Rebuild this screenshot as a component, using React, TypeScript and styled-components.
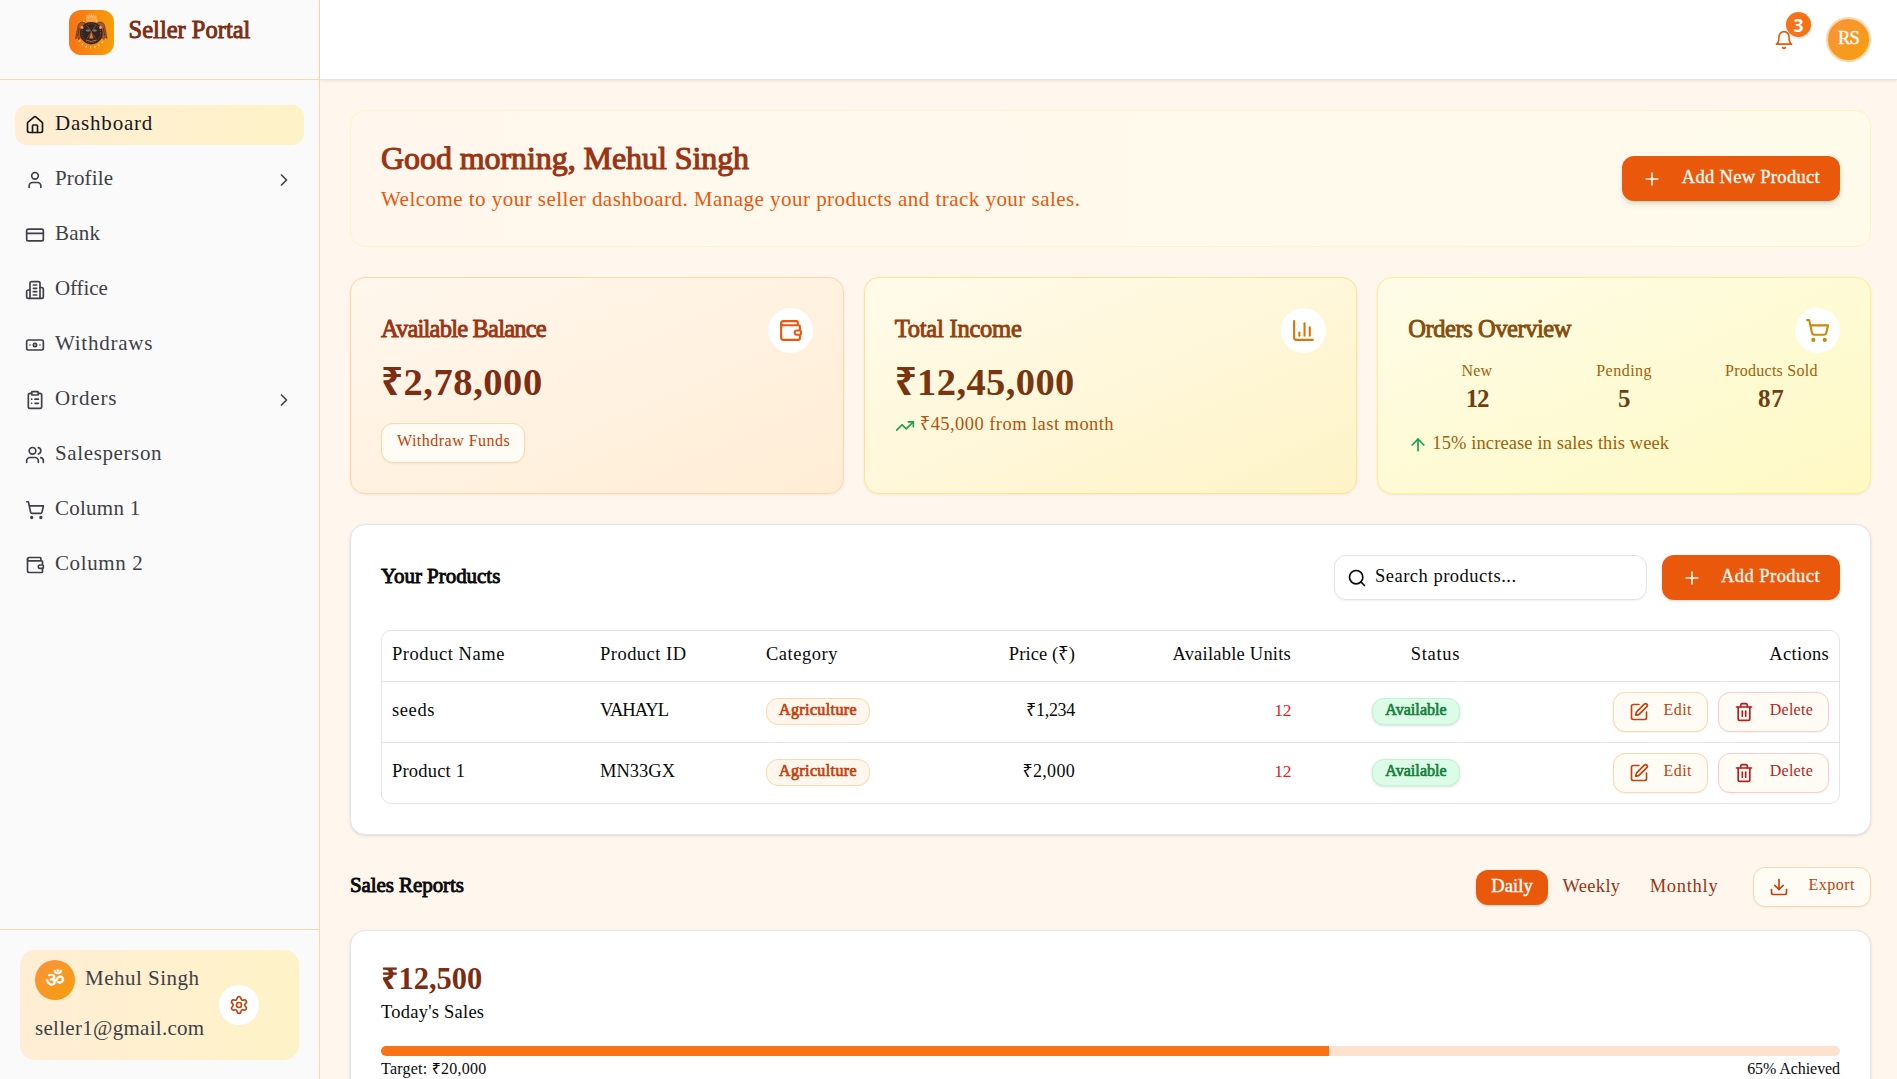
import React from 'react';
import styled, { createGlobalStyle, css } from 'styled-components';
import {
  ArrowUp,
  Banknote,
  ChartColumn,
  ChevronRight,
  ClipboardList,
  CreditCard,
  Download,
  House,
  Plus,
  Search,
  Settings,
  ShoppingCart,
  SquarePen,
  Trash2,
  TrendingUp,
  User,
  Users,
  Wallet,
} from 'lucide-react';

const GlobalStyle = createGlobalStyle`
  *, *::before, *::after { box-sizing: border-box; }
  html, body { margin: 0; height: 100%; overflow: hidden; }
  body {
    background: #fff6ed;
    color: #0a0a0a;
    font-family: 'Liberation Serif', 'Noto Sans', serif;
  }
  h1, h2, h3 { margin: 0; }
  button { font: inherit; margin: 0; cursor: pointer; }
  svg { flex: none; display: block; }
`;

interface TextProps {
  $size?: number;
  $track?: number;
  $lh?: number;
  $lift?: number;
  $color?: string;
  $heavy?: number;
  $bold?: boolean;
}

const Text = styled.span<TextProps>`
  display: block;
  white-space: pre;
  font-size: ${p => p.$size ?? 18.5}px;
  letter-spacing: ${p => p.$track ?? 0}px;
  line-height: calc(${p => p.$lh ?? 26}px - ${p => p.$lift ?? 0.18}em);
  padding-bottom: ${p => p.$lift ?? 0.18}em;
  font-weight: ${p => (p.$bold ? 700 : 400)};
  ${p => p.$color && css`color: ${p.$color};`}
  ${p => p.$heavy && css`-webkit-text-stroke: ${p.$heavy}px currentColor;`}
`;

const SmallText = styled(Text).attrs({ $size: 16, $lift: 0.28 })``;

/* Shell */
const Shell = styled.div`
  display: flex;
  height: 1079px;
  overflow: hidden;
`;

const Sidebar = styled.aside`
  display: flex;
  flex-direction: column;
  flex: none;
  width: 320px;
  background: #fafafa;
  border-right: 1px solid #fed7aa;
`;

const Brand = styled.div`
  display: flex;
  justify-content: center;
  align-items: flex-start;
  gap: 15px;
  flex: none;
  height: 80px;
  padding-top: 10px;
  border-bottom: 1px solid #fed7aa;
`;

const LogoTile = styled.div`
  width: 45px;
  height: 45px;
  border-radius: 12px;
  overflow: hidden;
  background: linear-gradient(to right, #f97316, #f59e0b);
`;

const Nav = styled.nav`
  display: flex;
  flex-direction: column;
  flex: 1;
  gap: 15px;
  padding: 25px 15px;
`;

const NavItem = styled.a<{ $active?: boolean }>`
  display: flex;
  align-items: center;
  gap: 10px;
  height: 40px;
  padding: 0 10px;
  border-radius: 12px;
  color: ${p => (p.$active ? '#18181b' : '#3f3f46')};
  background: ${p => (p.$active ? 'linear-gradient(to right, #ffedd5, #fef3c7)' : 'none')};
  & > svg:last-child:not(:first-child) { margin-left: auto; }
`;

const SidebarFooter = styled.div`
  flex: none;
  height: 150px;
  padding: 20px;
  border-top: 1px solid #fed7aa;
`;

const UserCard = styled.div`
  display: flex;
  align-items: center;
  gap: 15px;
  height: 110px;
  padding: 10px 15px;
  border-radius: 15px;
  background: linear-gradient(to right, #ffedd5, #fef3c7);
  color: #3f3f46;
`;

const UserInfo = styled.div`
  display: flex;
  flex-direction: column;
  gap: 10px;
  width: 169px;
`;

const UserLine = styled.div`
  display: flex;
  align-items: center;
  gap: 10px;
  height: 40px;
`;

const Avatar = styled.div<{ $size: number; $ring?: boolean }>`
  display: flex;
  align-items: center;
  justify-content: center;
  flex: none;
  width: ${p => p.$size}px;
  height: ${p => p.$size}px;
  border-radius: 50%;
  color: #fff;
  background: linear-gradient(to bottom right, #fb923c, #f59e0b) border-box;
  ${p => p.$ring && css`border: 2px solid #fed7aa;`}
`;

const IconCircle = styled.div<{ $size: number; $color: string }>`
  display: flex;
  align-items: center;
  justify-content: center;
  flex: none;
  width: ${p => p.$size}px;
  height: ${p => p.$size}px;
  border-radius: 50%;
  background: #fff;
  color: ${p => p.$color};
`;

/* Main column */
const Main = styled.div`
  display: flex;
  flex-direction: column;
  flex: 1;
  min-width: 0;
`;

const TopBar = styled.header`
  display: flex;
  align-items: center;
  justify-content: flex-end;
  gap: 20px;
  flex: none;
  height: 80px;
  padding-right: 26px;
  background: #fff;
  border-bottom: 1px solid #e5e7eb;
  box-shadow: 0 1px 3px rgba(0, 0, 0, 0.08);
`;

const BellButton = styled.button`
  position: relative;
  display: flex;
  align-items: center;
  justify-content: center;
  width: 45px;
  height: 45px;
  padding: 0;
  border: 0;
  background: none;
  color: #ea580c;
`;

const Count = styled.span`
  position: absolute;
  top: -5px;
  right: -5px;
  display: flex;
  align-items: center;
  justify-content: center;
  width: 25px;
  height: 25px;
  border-radius: 50%;
  background: #f97316;
  color: #fff;
  font: 700 17.5px 'Noto Sans', sans-serif;
  box-shadow: 0 1px 3px rgba(0, 0, 0, 0.15);
`;

const Content = styled.main`
  display: flex;
  flex-direction: column;
  gap: 30px;
  flex: 1;
  min-height: 0;
  overflow: hidden;
  padding: 30px 26px 0 30px;
`;

const Welcome = styled.section`
  display: flex;
  justify-content: space-between;
  align-items: flex-start;
  flex: none;
  height: 137px;
  padding: 30px;
  border: 1px solid #fef3c7;
  border-radius: 15px;
  background: linear-gradient(to right, #fff7ed, #fffbeb);
  & > button { margin-top: 15px; }
`;

const PrimaryButton = styled.button<{ $w: number; $raised?: boolean }>`
  display: flex;
  align-items: center;
  justify-content: space-between;
  width: ${p => p.$w}px;
  height: 45px;
  padding: 0 20px;
  border: 0;
  border-radius: 12px;
  background: #ea580c;
  color: #fff7ed;
  box-shadow: ${p =>
    p.$raised
      ? '0 4px 6px -1px rgba(0,0,0,.12), 0 2px 4px -2px rgba(0,0,0,.12)'
      : '0 1px 3px rgba(0,0,0,.14)'};
`;

const OutlineButton = styled.button<{ $w: number; $tone?: 'danger' }>`
  display: flex;
  align-items: center;
  justify-content: space-between;
  width: ${p => p.$w}px;
  height: 40px;
  padding: 0 15px;
  border: 1px solid ${p => (p.$tone === 'danger' ? '#fecaca' : '#fed7aa')};
  border-radius: 12px;
  background: #fffcf5;
  color: ${p => (p.$tone === 'danger' ? '#b91c1c' : '#c2410c')};
  box-shadow: 0 1px 2px rgba(0, 0, 0, 0.05);
`;

const StatGrid = styled.section`
  display: grid;
  grid-template-columns: repeat(3, 1fr);
  gap: 20px;
  flex: none;
`;

const StatCard = styled.article<{ $from: string; $to: string; $line: string }>`
  height: 217px;
  padding: 30px;
  border: 1px solid ${p => p.$line};
  border-radius: 15px;
  background: linear-gradient(to bottom right, ${p => p.$from}, ${p => p.$to});
  box-shadow: 0 1px 3px rgba(0, 0, 0, 0.07);
`;

const StatHead = styled.div`
  display: flex;
  align-items: center;
  justify-content: space-between;
  margin-bottom: 10px;
`;

const Trend = styled.div<{ $top: number; $gap: number }>`
  display: flex;
  align-items: center;
  gap: ${p => p.$gap}px;
  height: 27px;
  margin-top: ${p => p.$top}px;
`;

const Spaced = styled.div`
  margin-top: 14px;
`;

const OrderStats = styled.div`
  display: grid;
  grid-template-columns: repeat(3, 1fr);
  gap: 10px;
  text-align: center;
`;

const Card = styled.section`
  flex: none;
  padding: 30px;
  border: 1px solid #e5e5e5;
  border-radius: 15px;
  background: #fff;
  box-shadow: 0 1px 3px rgba(0, 0, 0, 0.12);
`;

const CardHead = styled.div`
  display: flex;
  align-items: center;
  justify-content: space-between;
  margin-bottom: 30px;
`;

const Controls = styled.div<{ $gap: number }>`
  display: flex;
  align-items: center;
  gap: ${p => p.$gap}px;
`;

const SearchBox = styled.div`
  display: flex;
  align-items: center;
  gap: 8px;
  width: 313px;
  height: 45px;
  padding: 0 12px;
  border: 1px solid #e5e5e5;
  border-radius: 12px;
  background: #fff;
  box-shadow: 0 1px 2px rgba(0, 0, 0, 0.05);
`;

/* Products table */
const Table = styled.div`
  border: 1px solid #e5e5e5;
  border-radius: 10px;
`;

const TableRow = styled.div<{ $h: number }>`
  display: grid;
  grid-template-columns: 208px 166px 190px 139px 216px 169px 1fr;
  align-items: center;
  height: ${p => p.$h}px;
  &:not(:last-child) { border-bottom: 1px solid #e5e5e5; }
`;

const Cell = styled.div<{ $end?: boolean }>`
  display: flex;
  gap: 10px;
  justify-content: ${p => (p.$end ? 'flex-end' : 'flex-start')};
  padding: 0 10px;
`;

const Pill = styled.span<{ $w: number; $green?: boolean }>`
  display: flex;
  align-items: center;
  justify-content: center;
  width: ${p => p.$w}px;
  height: 27px;
  margin-bottom: 1px;
  border-radius: 12px;
  border: 1px solid ${p => (p.$green ? '#bbf7d0' : '#fed7aa')};
  background: ${p => (p.$green ? '#dcfce7' : '#fff7ed')};
  color: ${p => (p.$green ? '#15803d' : '#c2410c')};
  box-shadow: ${p => (p.$green ? '0 1px 3px rgba(0,0,0,.14)' : 'none')};
`;

/* Reports */
const Reports = styled.section`
  display: flex;
  flex-direction: column;
  gap: 20px;
  flex: none;
`;

const ReportsHead = styled.div`
  display: flex;
  align-items: center;
  justify-content: space-between;
  height: 45px;
  padding-bottom: 1px;
`;

const Tabs = styled.div`
  display: flex;
  margin-top: 1px;
`;

const Tab = styled.button<{ $active?: boolean; $w: number }>`
  display: flex;
  align-items: center;
  justify-content: center;
  width: ${p => p.$w}px;
  height: 35px;
  padding: 0;
  border: 0;
  border-radius: 12px;
  background: ${p => (p.$active ? '#ea580c' : 'none')};
  color: ${p => (p.$active ? '#fff' : '#9a3412')};
  box-shadow: ${p => (p.$active ? '0 1px 3px rgba(0,0,0,.14)' : 'none')};
`;

const Track = styled.div`
  height: 10px;
  margin: 21px 0 4px;
  border-radius: 5px;
  overflow: hidden;
  background: #fee2d0;
`;

const Fill = styled.div`
  height: 100%;
  background: #f97316;
`;

const Split = styled.div`
  display: flex;
  justify-content: space-between;
`;

interface IconProps {
  size?: number;
}

const BellIcon = ({ size = 20 }: IconProps) => (
  <svg width={size} height={size} viewBox="0 0 24 24" fill="none" stroke="currentColor" strokeWidth="2" strokeLinecap="round" strokeLinejoin="round">
    <path d="M6 8a6 6 0 0 1 12 0c0 7 3 9 3 9H3s3-2 3-9" />
    <path d="M10.3 21a1.94 1.94 0 0 0 3.4 0" />
  </svg>
);

const OfficeIcon = ({ size = 20 }: IconProps) => (
  <svg width={size} height={size} viewBox="0 0 24 24" fill="none" stroke="currentColor" strokeWidth="2" strokeLinecap="round" strokeLinejoin="round">
    <path d="M6 22V4a2 2 0 0 1 2-2h8a2 2 0 0 1 2 2v18Z" />
    <path d="M6 12H4a2 2 0 0 0-2 2v6a2 2 0 0 0 2 2h2" />
    <path d="M18 9h2a2 2 0 0 1 2 2v9a2 2 0 0 1-2 2h-2" />
    <path d="M10 6h4M10 10h4M10 14h4M10 18h4" />
  </svg>
);

const Emblem = () => (
  <svg width="45" height="45" viewBox="0 0 45 45" fill="none">
    <circle cx="22.3" cy="23.6" r="14" stroke="#fde0b0" strokeWidth="2" strokeDasharray="1.2 3.2" opacity=".85" />
    <path d="M17.6 11 L18 5.6 L19.5 8.500 L20.200 4.500 L21.500 7.500 L22.400 3.400 L23.400 7.500 L24.600 4.500 L25.400 8.500 L26.900 5.600 L27.300 11Z" fill="#f9a13c" stroke="#fdc890" strokeWidth=".6" />
    <path d="M16 13c-3-2-6.200-.5-7 3C8.200 20 7.400 24 6.600 28.500l2.200-1.400.8 2.400 2-2 1.800 2 4-6Z" fill="#a3582a" stroke="#5b3020" strokeWidth=".7" />
    <path d="M28.600 13c3-2 6.200-.5 7 3 .8 4 1.600 8 2.400 12.500l-2.200-1.400-.8 2.400-2-2-1.800 2-4-6Z" fill="#a3582a" stroke="#5b3020" strokeWidth=".7" />
    <path d="M10.200 18l-1.400 8M12.200 18l-.8 8.500M34.400 18l1.400 8M32.400 18l.8 8.500" stroke="#4d2b22" strokeWidth=".8" />
    <circle cx="22.300" cy="23.200" r="11.200" fill="#35231f" />
    <circle cx="22.300" cy="23.200" r="9.400" stroke="#8a5a3c" strokeWidth=".9" strokeDasharray="1.300 1.100" />
    <circle cx="13" cy="17.500" r="1.400" fill="#e8a060" />
    <circle cx="31.600" cy="17.500" r="1.400" fill="#e8a060" />
    <path d="M16.400 20.500q2.600-2.400 5 0q-2 2.400-5 0ZM23.200 20.500q2.600-2.400 5 0q-2.400 2.400-5 0Z" fill="#77706c" />
    <path d="M18 15.500l8.600 13M26.600 15.500L18 28.500" stroke="#7d5a46" strokeWidth=".8" />
    <path d="M22.300 22l2.200 6.500h-4.400Z" fill="#e07b35" />
    <path d="M17 30q5.300 3 10.600 0" stroke="#b7703f" strokeWidth="1" />
  </svg>
);

interface NavEntry {
  label: string;
  icon: React.ElementType;
  track: number;
  more?: boolean;
}

const navEntries: NavEntry[] = [
  { label: 'Dashboard', icon: House, track: 0.8 },
  { label: 'Profile', icon: User, track: 0.15, more: true },
  { label: 'Bank', icon: CreditCard, track: 0.2 },
  { label: 'Office', icon: OfficeIcon, track: -0.1 },
  { label: 'Withdraws', icon: Banknote, track: 0.77 },
  { label: 'Orders', icon: ClipboardList, track: 0.87, more: true },
  { label: 'Salesperson', icon: Users, track: 0.62 },
  { label: 'Column 1', icon: ShoppingCart, track: 0.25 },
  { label: 'Column 2', icon: Wallet, track: 0.6 },
];

const orderStats = [
  { label: 'New', value: '12', track: 0.14, numTrack: -1.2 },
  { label: 'Pending', value: '5', track: 0.5, numTrack: 0 },
  { label: 'Products Sold', value: '87', track: 0.26, numTrack: 0.8 },
];

const products = [
  { name: 'seeds', nameTrack: 0.6, id: 'VAHAYL', idTrack: -1, price: '₹1,234', priceTrack: -0.3 },
  { name: 'Product 1', nameTrack: 0.2, id: 'MN33GX', idTrack: 0, price: '₹2,000', priceTrack: 0.3 },
];

export default function App() {
  const progress = 65;
  return (
    <Shell>
      <GlobalStyle />
      <Sidebar>
        <Brand>
          <LogoTile><Emblem /></LogoTile>
          <Text as="h2" $size={24.5} $track={0} $lh={45} $color="#7c2d12" $heavy={0.9}>Seller Portal</Text>
        </Brand>
        <Nav>
          {navEntries.map(({ label, icon: Icon, track, more }, i) => (
            <NavItem key={label} $active={i === 0}>
              <Icon size={20} />
              <Text $size={21} $track={track}>{label}</Text>
              {more && <ChevronRight size={20} />}
            </NavItem>
          ))}
        </Nav>
        <SidebarFooter>
          <UserCard>
            <UserInfo>
              <UserLine>
                <Avatar $size={40}><Text $size={21} $lift={0} $heavy={0.4}>ॐ</Text></Avatar>
                <Text $size={21} $track={0.49}>Mehul Singh</Text>
              </UserLine>
              <UserLine><Text $size={21} $track={0.29}>seller1@gmail.com</Text></UserLine>
            </UserInfo>
            <IconCircle $size={40} $color="#c2410c"><Settings size={20} /></IconCircle>
          </UserCard>
        </SidebarFooter>
      </Sidebar>

      <Main>
        <TopBar>
          <BellButton aria-label="Notifications">
            <BellIcon />
            <Count>3</Count>
          </BellButton>
          <Avatar $size={45} $ring><Text $size={18.5} $track={-0.8} $heavy={0.4}>RS</Text></Avatar>
        </TopBar>

        <Content>
          <Welcome>
            <div>
              <Text as="h1" $size={32} $lh={42} $lift={0.22} $track={-0.07} $color="#9a3412" $heavy={1.1}>Good morning, Mehul Singh</Text>
              <Text $size={21} $lh={36} $track={0.47} $color="#ea580c">Welcome to your seller dashboard. Manage your products and track your sales.</Text>
            </div>
            <PrimaryButton $w={218} $raised>
              <Plus size={20} />
              <Text $track={0.31} $heavy={0.35}>Add New Product</Text>
            </PrimaryButton>
          </Welcome>

          <StatGrid>
            <StatCard $from="#fff7ed" $to="#ffedd5" $line="#fed7aa">
              <StatHead>
                <Text as="h3" $size={24.5} $track={-0.8} $color="#9a3412" $heavy={0.9}>Available Balance</Text>
                <IconCircle $size={45} $color="#ea580c"><Wallet size={25} /></IconCircle>
              </StatHead>
              <Text $size={38.5} $lh={46} $track={0.55} $lift={0.16} $color="#7c2d12" $bold>₹2,78,000</Text>
              <Spaced>
                <OutlineButton $w={144}><SmallText $track={0.48}>Withdraw Funds</SmallText></OutlineButton>
              </Spaced>
            </StatCard>

            <StatCard $from="#fffbeb" $to="#fef3c7" $line="#fde68a">
              <StatHead>
                <Text as="h3" $size={24.5} $track={-0.22} $color="#92400e" $heavy={0.9}>Total Income</Text>
                <IconCircle $size={45} $color="#d97706"><ChartColumn size={25} /></IconCircle>
              </StatHead>
              <Text $size={38.5} $lh={46} $track={0.4} $lift={0.16} $color="#78350f" $bold>₹12,45,000</Text>
              <Trend $top={3} $gap={5}>
                <TrendingUp size={20} color="#16a34a" />
                <Text $track={0.44} $color="#b45309">₹45,000 from last month</Text>
              </Trend>
            </StatCard>

            <StatCard $from="#fefce8" $to="#fef9c3" $line="#fef08a">
              <StatHead>
                <Text as="h3" $size={24.5} $track={-0.45} $color="#854d0e" $heavy={0.9}>Orders Overview</Text>
                <IconCircle $size={45} $color="#ca8a04"><ShoppingCart size={25} /></IconCircle>
              </StatHead>
              <OrderStats>
                {orderStats.map(s => (
                  <div key={s.label}>
                    <SmallText $lh={20} $track={s.track} $color="#a16207">{s.label}</SmallText>
                    <Text $size={25} $lh={36} $track={s.numTrack} $color="#713f12" $bold>{s.value}</Text>
                  </div>
                ))}
              </OrderStats>
              <Trend $top={13} $gap={4}>
                <ArrowUp size={20} color="#16a34a" />
                <Text $track={0.1} $color="#a16207">15% increase in sales this week</Text>
              </Trend>
            </StatCard>
          </StatGrid>

          <Card>
            <CardHead>
              <Text as="h3" $size={21} $track={-0.04} $heavy={0.9}>Your Products</Text>
              <Controls $gap={15}>
                <SearchBox>
                  <Search size={20} />
                  <Text $track={0.5}>Search products...</Text>
                </SearchBox>
                <PrimaryButton $w={178}>
                  <Plus size={20} />
                  <Text $track={0.45} $heavy={0.35}>Add Product</Text>
                </PrimaryButton>
              </Controls>
            </CardHead>
            <Table>
              <TableRow $h={51}>
                <Cell><Text $track={0.55}>Product Name</Text></Cell>
                <Cell><Text $track={0.48}>Product ID</Text></Cell>
                <Cell><Text $track={0.53}>Category</Text></Cell>
                <Cell $end><Text $track={0.07}>Price (₹)</Text></Cell>
                <Cell $end><Text $track={0.22}>Available Units</Text></Cell>
                <Cell $end><Text $track={0.65}>Status</Text></Cell>
                <Cell $end><Text $track={0.3}>Actions</Text></Cell>
              </TableRow>
              {products.map((p, i) => (
                <TableRow key={p.id} $h={i === 0 ? 61 : 60}>
                  <Cell><Text $track={p.nameTrack}>{p.name}</Text></Cell>
                  <Cell><Text $track={p.idTrack}>{p.id}</Text></Cell>
                  <Cell><Pill $w={104}><SmallText $track={0.38} $heavy={0.7}>Agriculture</SmallText></Pill></Cell>
                  <Cell $end><Text $size={18} $track={p.priceTrack}>{p.price}</Text></Cell>
                  <Cell $end><Text $size={17.5} $track={-0.4} $color="#dc2626">12</Text></Cell>
                  <Cell $end><Pill $w={88} $green><SmallText $track={0.06} $heavy={0.7}>Available</SmallText></Pill></Cell>
                  <Cell $end>
                    <OutlineButton $w={95}>
                      <SquarePen size={20} />
                      <SmallText $track={0.45}>Edit</SmallText>
                    </OutlineButton>
                    <OutlineButton $w={111} $tone="danger">
                      <Trash2 size={20} />
                      <SmallText $track={0.25}>Delete</SmallText>
                    </OutlineButton>
                  </Cell>
                </TableRow>
              ))}
            </Table>
          </Card>

          <Reports>
            <ReportsHead>
              <Text as="h3" $size={21} $track={-0.08} $heavy={0.9}>Sales Reports</Text>
              <Controls $gap={20}>
                <Tabs>
                  <Tab $w={72} $active><Text $track={0.1} $heavy={0.4}>Daily</Text></Tab>
                  <Tab $w={87}><Text $track={0.29}>Weekly</Text></Tab>
                  <Tab $w={98}><Text $track={0.71}>Monthly</Text></Tab>
                </Tabs>
                <OutlineButton $w={118}>
                  <Download size={20} />
                  <SmallText $track={0.49}>Export</SmallText>
                </OutlineButton>
              </Controls>
            </ReportsHead>
            <Card>
              <Text $size={30.5} $lh={42} $track={0} $color="#7c2d12" $bold>₹12,500</Text>
              <Text $lh={22} $track={0.24}>Today's Sales</Text>
              <Track><Fill style={{ width: `${progress}%` }} /></Track>
              <Split>
                <Text $size={16} $lh={21} $track={0.23}>Target: ₹20,000</Text>
                <Text $size={16} $lh={21} $track={-0.08}>{`${progress}% Achieved`}</Text>
              </Split>
            </Card>
          </Reports>
        </Content>
      </Main>
    </Shell>
  );
}
